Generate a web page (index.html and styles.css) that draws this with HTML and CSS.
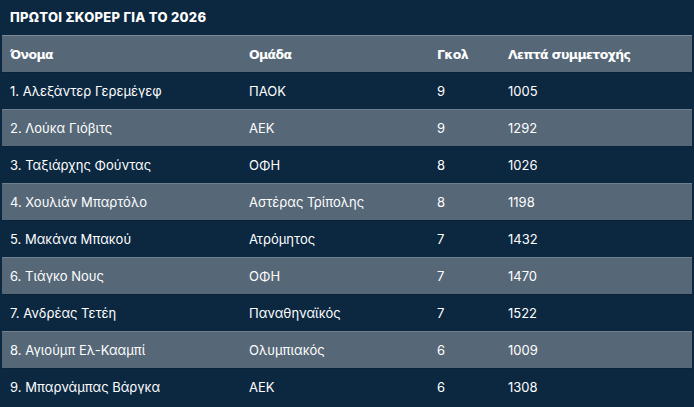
FILE: index.html
```html
<!DOCTYPE html>
<html lang="el">
<head>
<meta charset="utf-8">
<link rel="stylesheet" href="styles.css">
</head>
<body>
<div class="box">
  <h2 class="title">ΠΡΩΤΟΙ ΣΚΟΡΕΡ ΓΙΑ ΤΟ 2026</h2>
  <table class="scorers">
    <thead>
      <tr><th class="c-name">Όνομα</th><th class="c-team">Ομάδα</th><th class="c-goals">Γκολ</th><th class="c-min">Λεπτά συμμετοχής</th></tr>
    </thead>
    <tbody>
      <tr><td>1. Αλεξάντερ Γερεμέγεφ</td><td>ΠΑΟΚ</td><td>9</td><td>1005</td></tr>
      <tr><td>2. Λούκα Γιόβιτς</td><td>ΑΕΚ</td><td>9</td><td>1292</td></tr>
      <tr><td>3. Ταξιάρχης Φούντας</td><td>ΟΦΗ</td><td>8</td><td>1026</td></tr>
      <tr><td>4. Χουλιάν Μπαρτόλο</td><td>Αστέρας Τρίπολης</td><td>8</td><td>1198</td></tr>
      <tr><td>5. Μακάνα Μπακού</td><td>Ατρόμητος</td><td>7</td><td>1432</td></tr>
      <tr><td>6. Τιάγκο Νους</td><td>ΟΦΗ</td><td>7</td><td>1470</td></tr>
      <tr><td>7. Ανδρέας Τετέη</td><td>Παναθηναϊκός</td><td>7</td><td>1522</td></tr>
      <tr><td>8. Αγιούμπ Ελ-Κααμπί</td><td>Ολυμπιακός</td><td>6</td><td>1009</td></tr>
      <tr><td>9. Μπαρνάμπας Βάργκα</td><td>ΑΕΚ</td><td>6</td><td>1308</td></tr>
    </tbody>
  </table>
</div>
</body>
</html>
```

FILE: styles.css
```css
html, body {
  margin: 0;
  padding: 0;
  background: #0c2841;
}
.box {
  width: 694px;
  height: 407px;
  background: #0c2841;
  color: #ffffff;
  font-family: "Inter", "Noto Sans", sans-serif;
  overflow: hidden;
}
.title {
  margin: 0;
  padding: 10px 10px 0 10px;
  height: 25px;
  font-size: 13px;
  font-weight: 800;
  letter-spacing: 0.3px;
  line-height: 15px;
}
.scorers {
  margin-left: 2px;
  width: 690px;
  border-collapse: collapse;
  font-size: 13px;
}
.scorers th, .scorers td {
  height: 36px;
  padding: 0 0 0 8px;
  text-align: left;
  vertical-align: middle;
  border-top: 1px solid #0a2238;
}
.scorers th {
  font-family: "DejaVu Sans", "Noto Sans", sans-serif;
  font-weight: bold;
  font-size: 12.5px;
  letter-spacing: -0.6px;
  background: #566878;
  border-top: 1px solid #7a8a97;
}
.scorers tbody tr:nth-child(even) td {
  background: #566878;
  border-top: 1px solid #6e7f8d;
}
.c-name { width: 231px; }
.c-team { width: 180px; }
.c-goals { width: 63px; }
```
